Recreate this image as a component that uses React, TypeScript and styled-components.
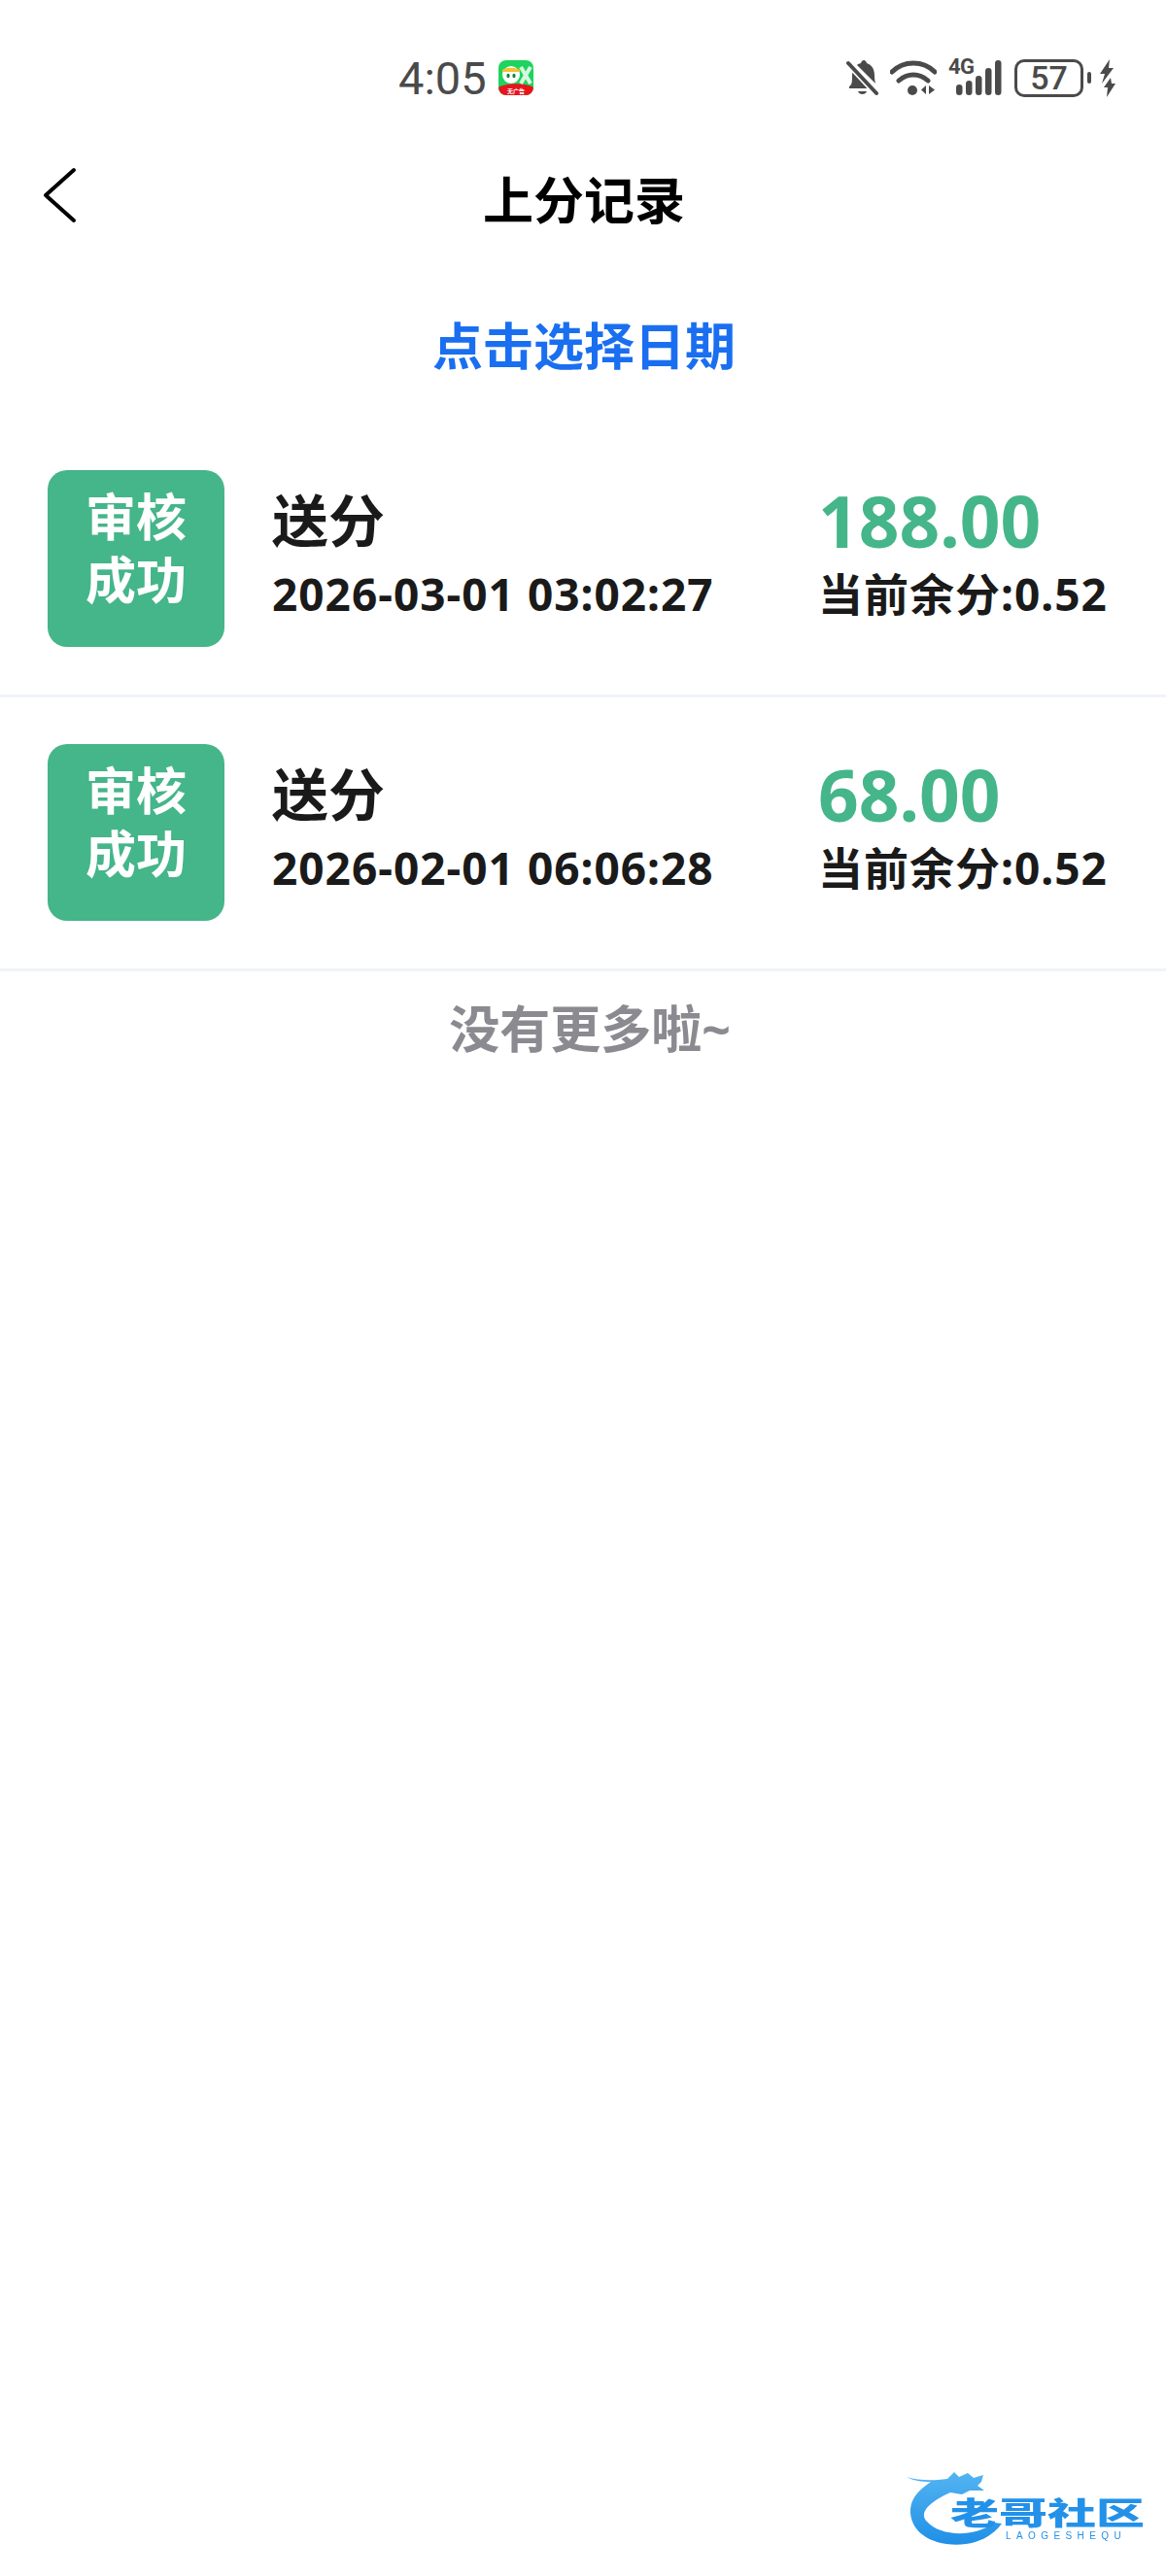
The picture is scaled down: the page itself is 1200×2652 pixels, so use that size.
import { FC } from 'react'

import styled, { createGlobalStyle } from 'styled-components'

const records = [
	{ amount: '188.00', time: '2026-03-01 03:02:27', balance: '0.52' },
	{ amount: '68.00', time: '2026-02-01 06:06:28', balance: '0.52' },
]

const GlobalStyle = createGlobalStyle`
	html,
	body {
		margin: 0;
		padding: 0;
		background: #fff;
	}

	* {
		box-sizing: border-box;
	}
`

const Page = styled.div`
	position: relative;
	width: 1200px;
	height: 2652px;
	overflow: hidden;
	background: #fff;
	font-family: 'Noto Sans', 'Noto Sans CJK SC', sans-serif;
	font-weight: 700;
	color: #1a1a1a;
`

const StatusBar = styled.header`
	height: 160px;
	padding: 0 52px 0 410px;
	display: flex;
	align-items: center;
	color: #4a4a4a;
`

const Clock = styled.span`
	font-family: Roboto, sans-serif;
	font-size: 47px;
	font-weight: 400;
	line-height: 1;
	margin-right: 12px;
`

const StatusIcons = styled.div`
	margin-left: auto;
	display: flex;
	align-items: center;
`

const Signal = styled.div`
	position: relative;
	width: 55px;
	height: 36px;
	margin-left: 12px;
`

const NetworkLabel = styled.span`
	position: absolute;
	left: 0;
	top: -4px;
	font-family: Roboto, sans-serif;
	font-size: 22px;
	font-weight: 700;
	line-height: 22px;
	letter-spacing: -0.5px;
`

const Battery = styled.div`
	width: 71px;
	height: 39px;
	margin-left: 13px;
	border: 3px solid #4a4a4a;
	border-radius: 10px;
	display: flex;
	align-items: center;
	justify-content: center;
	font-family: Roboto, sans-serif;
	font-size: 34px;
	font-weight: 500;
	line-height: 1;
`

const BatteryNub = styled.span`
	width: 4px;
	height: 12px;
	margin: 0 9px 0 4px;
	border-radius: 2px;
	background: #4a4a4a;
`

const Nav = styled.nav`
	position: relative;
	height: 92px;
	padding-left: 2px;
	display: flex;
	align-items: center;
	justify-content: center;
`

const BackButton = styled.svg`
	position: absolute;
	left: 44px;
	top: 11px;
`

const Title = styled.h1`
	margin: 0;
	font-size: 52px;
	font-weight: 700;
	line-height: 1;
	color: #000;
`

const DatePicker = styled.div`
	height: 184px;
	padding: 24px 0 0 2px;
	display: flex;
	align-items: center;
	justify-content: center;
	font-size: 52px;
	line-height: 1;
	color: #1a6ff0;
`

const Row = styled.article`
	padding: 48px 37px 49px 49px;
	display: grid;
	grid-template-columns: 182px 1fr 321px;
	column-gap: 49px;
	border-bottom: 3px solid #f0f4f8;
`

const StatusBadge = styled.div`
	height: 182px;
	padding-top: 15px;
	border-radius: 20px;
	background: #45b58a;
	color: #fff;
	font-size: 52px;
	line-height: 65px;
	text-align: center;
`

const Info = styled.div`
	display: flex;
	flex-direction: column;
`

const RecordType = styled.h2`
	margin: 17px 0 0;
	font-size: 58px;
	font-weight: 700;
	line-height: 70px;
`

const Detail = styled.span`
	margin-top: 10px;
	font-size: 46px;
	line-height: 60px;
	letter-spacing: 1px;
	white-space: nowrap;
`

const Amount = styled.div`
	margin-top: 17px;
	font-size: 73px;
	line-height: 70px;
	color: #45b58a;
`

const EndNote = styled.p`
	margin: 29px 0 0;
	padding-left: 14px;
	font-size: 52px;
	line-height: 60px;
	text-align: center;
	color: #8a8a90;
`

const Watermark = styled.div`
	position: absolute;
	left: 930px;
	top: 2540px;
	width: 256px;
	height: 88px;
	filter: blur(0.7px);
	color: #2391e8;
`

const WatermarkName = styled.span`
	position: absolute;
	left: 48px;
	top: 20px;
	font-family: 'Noto Sans CJK SC', sans-serif;
	font-size: 50px;
	font-weight: 900;
	line-height: 50px;
	white-space: nowrap;
	transform: scaleY(0.64);
`

const WatermarkLatin = styled.span`
	position: absolute;
	left: 105px;
	top: 66px;
	font-family: 'Liberation Sans', sans-serif;
	font-size: 10px;
	font-weight: 400;
	line-height: 10px;
	letter-spacing: 5.4px;
	white-space: nowrap;
`

const BellSlot = styled.span`
	display: flex;
	margin-right: 12px;
`

const AppIcon: FC = () => (
	<svg width='36' height='36' viewBox='0 0 36 36'>
		<rect width='36' height='36' rx='8' fill='#1ed45c' />
		<path d='M0 28c8-5 28-5 36 0a8 8 0 0 1-8 8H8a8 8 0 0 1-8-8z' fill='#e8141c' />
		<circle cx='13' cy='15' r='9' fill='#fff' />
		<path d='M4 10c4-3 13-3 18 0v2H4z' fill='#f2c230' />
		<ellipse cx='10' cy='16' rx='1.6' ry='2.2' fill='#12843c' />
		<ellipse cx='16' cy='16' rx='1.6' ry='2.2' fill='#12843c' />
		<path d='M23 7l10 17M33 7L23 24' stroke='#d8f7e2' strokeWidth='4' />
		<text x='18' y='33.5' fontSize='6' fill='#fff' textAnchor='middle' fontFamily='Noto Sans CJK SC'>
			无广告
		</text>
	</svg>
)

const BellOff: FC = () => (
	<svg width='33' height='37' viewBox='0 0 33 37' fill='none'>
		<path
			d='M3 27c3-2 3-5 3-11 0-3 .6-6 2-8l19 21H3zM11 5c1-1 2-1.500 4-2 1-4 5-4 6 0 6 2 8 7 8 13 0 3 .5 6 1 8z'
			fill='#4a4a4a'
		/>
		<path d='M12 32h9c-1 4-8 4-9 0z' fill='#4a4a4a' />
		<path d='M2 3l29 31' stroke='#fff' strokeWidth='7' />
		<path d='M2 3l29 31' stroke='#4a4a4a' strokeWidth='4' strokeLinecap='round' />
	</svg>
)

const Wifi: FC = () => (
	<svg width='48' height='36' viewBox='0 0 48 36' fill='none'>
		<path
			d='M2 12c12-12 32-12 44 0M9 21c9-8 21-8 30 0'
			stroke='#4a4a4a'
			strokeWidth='5'
			strokeLinecap='round'
		/>
		<circle cx='23' cy='31' r='5' fill='#4a4a4a' />
		<path d='M37 26v9l-5-4.500zM40 26v9l6-4.500z' fill='#4a4a4a' />
	</svg>
)

const Bolt: FC = () => (
	<svg width='16' height='39' viewBox='0 0 16 39' fill='#4a4a4a'>
		<path d='M10 0L0 15h5l-3 10 12-16H9zM11 19l-7 10h4l-1 10 9-14h-4z' />
	</svg>
)

const Dragon: FC = () => (
	<svg width='256' height='88' viewBox='0 0 256 88'>
		<defs>
			<linearGradient id='dragon' x1='0' y1='0' x2='0' y2='1'>
				<stop offset='0' stopColor='#54b4f2' />
				<stop offset='1' stopColor='#1f8fe6' />
			</linearGradient>
		</defs>
		<path
			d='M3 10C15 14 30 14 45 12L52 5L57 10L66 6L72 11L82 8L80 15L76 19L83 24L68 24L60 28L48 26C30 34 14 46 24 56C38 72 75 72 93 57L101 58C88 76 65 82 44 79C18 75 6 60 7 43C8 30 18 22 28 15C18 15 10 14 3 10Z'
			fill='url(#dragon)'
		/>
	</svg>
)

const App: FC = () => {
	return (
		<Page>
			<GlobalStyle />
			<StatusBar>
				<Clock>4:05</Clock>
				<AppIcon />
				<StatusIcons>
					<BellSlot>
						<BellOff />
					</BellSlot>
					<Wifi />
					<Signal>
						<NetworkLabel>4G</NetworkLabel>
						<svg width='55' height='36' viewBox='0 0 55 36' fill='#4a4a4a'>
							<rect x='8' y='25' width='6.500' height='11' rx='3.250' />
							<rect x='18' y='21' width='6.500' height='15' rx='3.250' />
							<rect x='28' y='16' width='6.500' height='20' rx='3.250' />
							<rect x='38' y='8' width='6.500' height='28' rx='3.250' />
							<rect x='48' y='0' width='6.500' height='36' rx='3.250' />
						</svg>
					</Signal>
					<Battery>57</Battery>
					<BatteryNub />
					<Bolt />
				</StatusIcons>
			</StatusBar>
			<Nav>
				<BackButton width='36' height='60' viewBox='0 0 36 60' fill='none'>
					<path d='M32 4L3 30l29 26' stroke='#000' strokeWidth='4' strokeLinecap='round' strokeLinejoin='round' />
				</BackButton>
				<Title>上分记录</Title>
			</Nav>
			<DatePicker>点击选择日期</DatePicker>
			{records.map((record) => (
				<Row key={record.time}>
					<StatusBadge>
						审核
						<br />
						成功
					</StatusBadge>
					<Info>
						<RecordType>送分</RecordType>
						<Detail>{record.time}</Detail>
					</Info>
					<Info>
						<Amount>{record.amount}</Amount>
						<Detail>当前余分:{record.balance}</Detail>
					</Info>
				</Row>
			))}
			<EndNote>没有更多啦~</EndNote>
			<Watermark>
				<Dragon />
				<WatermarkName>老哥社区</WatermarkName>
				<WatermarkLatin>LAOGESHEQU</WatermarkLatin>
			</Watermark>
		</Page>
	)
}

export default App
